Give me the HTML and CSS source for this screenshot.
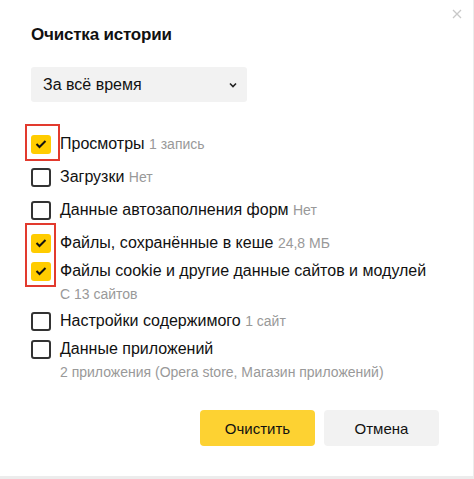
FILE: index.html
```html
<!DOCTYPE html>
<html lang="ru">
<head>
<meta charset="utf-8">
<title>Очистка истории</title>
<link rel="stylesheet" href="styles.css">
</head>
<body>
<div class="dialog">
  <button class="close" aria-label="Закрыть">
    <svg width="10" height="10" viewBox="0 0 10 10"><path d="M1 1L9 9M9 1L1 9" stroke="#c8c8c8" stroke-width="1.3" fill="none"/></svg>
  </button>
  <h1 class="title">Очистка истории</h1>
  <div class="select">
    <span>За всё время</span>
    <svg class="chev" width="8" height="6" viewBox="0 0 8 6"><path d="M1 1.5L4 4.5L7 1.5" stroke="#222" stroke-width="1.6" fill="none"/></svg>
  </div>
  <ul class="list">
    <li class="item item--mark">
      <span class="box box--on"><svg width="12" height="10" viewBox="0 0 12 10"><path d="M1.5 5L4.5 8L10.5 2" stroke="#111" stroke-width="2" fill="none"/></svg></span>
      <span class="label">Просмотры <span class="meta">1 запись</span></span>
    </li>
    <li class="item">
      <span class="box"></span>
      <span class="label">Загрузки <span class="meta">Нет</span></span>
    </li>
    <li class="item">
      <span class="box"></span>
      <span class="label">Данные автозаполнения форм <span class="meta">Нет</span></span>
    </li>
    <li class="group">
      <div class="item">
        <span class="box box--on"><svg width="12" height="10" viewBox="0 0 12 10"><path d="M1.5 5L4.5 8L10.5 2" stroke="#111" stroke-width="2" fill="none"/></svg></span>
        <span class="label">Файлы, сохранённые в кеше <span class="meta">24,8 МБ</span></span>
      </div>
      <div class="item item--tight">
        <span class="box box--on"><svg width="12" height="10" viewBox="0 0 12 10"><path d="M1.5 5L4.5 8L10.5 2" stroke="#111" stroke-width="2" fill="none"/></svg></span>
        <span class="label">Файлы cookie и другие данные сайтов и модулей</span>
      </div>
      <span class="mark mark--double"></span>
    </li>
    <li class="sub">С 13 сайтов</li>
    <li class="item item--tight">
      <span class="box"></span>
      <span class="label">Настройки содержимого <span class="meta">1 сайт</span></span>
    </li>
    <li class="item item--tight">
      <span class="box"></span>
      <span class="label">Данные приложений</span>
    </li>
    <li class="sub">2 приложения (Opera store, Магазин приложений)</li>
  </ul>
  <div class="actions">
    <button class="btn btn--primary">Очистить</button>
    <button class="btn">Отмена</button>
  </div>
</div>
</body>
</html>
```
FILE: styles.css
```css
* { box-sizing: border-box; }
html, body { margin: 0; padding: 0; }
body {
  background: #ececec;
  font-family: "Liberation Sans", Arial, sans-serif;
  color: #111;
  width: 474px;
  height: 479px;
  overflow: hidden;
}
.dialog {
  position: relative;
  width: 473px;
  height: 476px;
  background: #fff;
  padding: 24px 31px 0 31px;
}
.close {
  position: absolute;
  top: 9px;
  right: 11px;
  border: 0;
  background: none;
  padding: 0;
  width: 10px;
  height: 10px;
}
.close svg { display: block; }
.title {
  margin: 0;
  font-size: 17px;
  font-weight: bold;
  line-height: 22px;
  letter-spacing: -0.2px;
}
.select {
  margin-top: 21px;
  width: 216px;
  height: 35px;
  background: #f2f2f2;
  border-radius: 3px;
  display: flex;
  align-items: center;
  justify-content: space-between;
  padding: 0 10px 0 12px;
  font-size: 16px;
}
.chev { display: block; }
.list {
  list-style: none;
  margin: 28px 0 0 0;
  padding: 0;
}
.item {
  position: relative;
  display: flex;
  align-items: center;
  gap: 9px;
  height: 28px;
  margin-top: 5px;
  font-size: 16px;
}
.list > .item:first-child { margin-top: 0; }
.item--tight { margin-top: 0; }
.group { position: relative; margin-top: 5px; }
.group > .item:first-child { margin-top: 0; }
.box {
  flex: none;
  width: 20px;
  height: 19px;
  border: 2px solid #333;
  border-radius: 3px;
  display: flex;
  align-items: center;
  justify-content: center;
}
.box--on {
  border: 0;
  background: #ffcc00;
}
.box svg { display: block; }
.label { white-space: nowrap; }
.meta { color: #999; font-size: 14px; }
.sub {
  color: #999;
  font-size: 14px;
  padding-left: 29px;
  line-height: 18px;
  margin-bottom: 4px;
}
.item--mark::before,
.mark {
  content: "";
  position: absolute;
  border: 2px solid #e23a2e;
}
.item--mark::before {
  left: -6px;
  top: -6px;
  width: 31px;
  height: 33px;
}
.mark--double {
  left: -6px;
  top: -6px;
  width: 31px;
  height: 64px;
}
.actions {
  display: flex;
  justify-content: flex-end;
  gap: 9px;
  margin-top: 29px;
  padding-right: 3px;
}
.btn {
  width: 115px;
  height: 36px;
  border: 0;
  border-radius: 4px;
  background: #f2f2f2;
  font-family: inherit;
  font-size: 15px;
  color: #111;
}
.btn--primary { background: #fdd232; }
```
